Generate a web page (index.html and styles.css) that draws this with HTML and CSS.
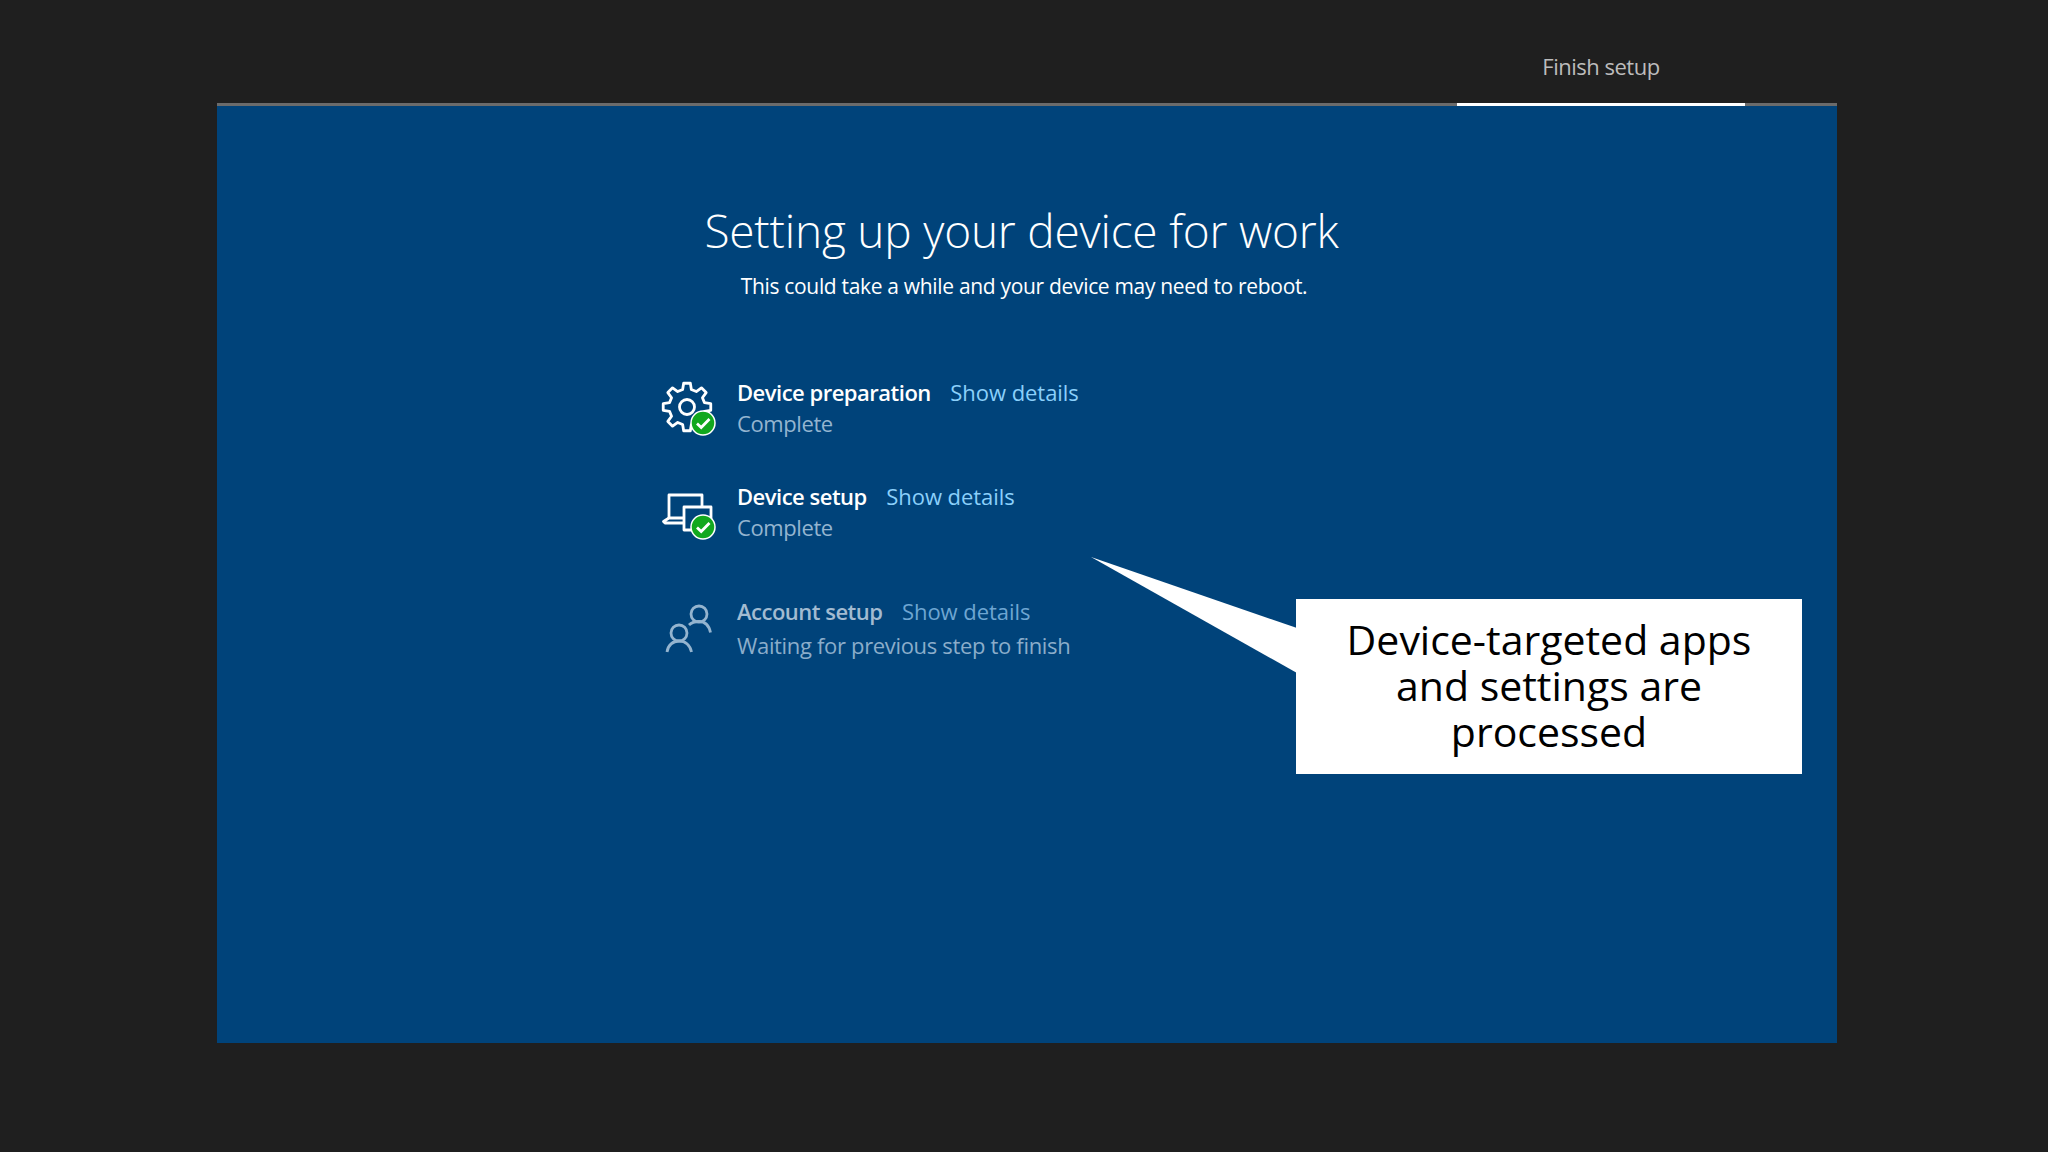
FILE: index.html
```html
<!DOCTYPE html>
<html lang="en">
<head>
<meta charset="utf-8">
<title>Setting up your device for work</title>
<link rel="stylesheet" href="styles.css">
</head>
<body>
<div class="frame">
  <header class="tabs"><div class="tab">Finish setup</div></header>
  <div class="track"><div class="track-fill"></div></div>
  <main class="panel">
    <h1 class="title">Setting up your device for work</h1>
    <p class="subtitle">This could take a while and your device may need to reboot.</p>
    <section class="steps">
      <div class="step step-prep">
        <svg class="icon" viewBox="0 0 60 60">
          <g class="gear" transform="translate(27 30)">
            <path d="M-4.35-17.47L-3.34-23.77 3.34-23.77 4.35-17.47 9.27-15.43 14.44-19.17 19.17-14.44 15.43-9.27 17.47-4.35 23.77-3.34 23.77 3.34 17.47 4.35 15.43 9.27 19.17 14.44 14.44 19.17 9.27 15.43 4.35 17.47 3.34 23.77-3.34 23.77-4.35 17.47-9.27 15.43-14.44 19.17-19.17 14.44-15.43 9.27-17.47 4.35-23.77 3.34-23.77-3.34-17.47-4.35-15.43-9.27-19.17-14.44-14.44-19.17-9.27-15.43Z"/>
            <circle r="7.5"/>
          </g>
          <circle class="badge" cx="43" cy="46" r="12"/>
          <path class="tick" d="M37 46.5l4.2 4L49.5 42"/>
        </svg>
        <div class="step-text">
          <div class="step-head"><span class="step-name">Device preparation</span><span class="step-link">Show details</span></div>
          <div class="step-status">Complete</div>
        </div>
      </div>
      <div class="step step-setup">
        <svg class="icon" viewBox="0 0 60 60">
          <g class="device">
            <path d="M9 37V14h33v11"/>
            <path d="M23 42H5l-1.500-1.500L9 37h14"/>
            <path d="M24 26h27v23H24Z"/>
          </g>
          <circle class="badge" cx="43" cy="46" r="12"/>
          <path class="tick" d="M37 46.500l4.200 4L49.500 42"/>
        </svg>
        <div class="step-text">
          <div class="step-head"><span class="step-name">Device setup</span><span class="step-link">Show details</span></div>
          <div class="step-status">Complete</div>
        </div>
      </div>
      <div class="step step-account">
        <svg class="icon" viewBox="0 0 60 60">
          <g class="people">
            <circle cx="39" cy="18" r="8"/>
            <path d="M29 29c3-3 6-3.500 10-3.500 6 0 10 4 11.500 11"/>
            <circle cx="19" cy="37" r="8"/>
            <path d="M7 56c1-7 6-11 12-11s11 4 12.500 11"/>
          </g>
        </svg>
        <div class="step-text">
          <div class="step-head"><span class="step-name">Account setup</span><span class="step-link">Show details</span></div>
          <div class="step-status">Waiting for previous step to finish</div>
        </div>
      </div>
    </section>
    <svg class="tail" viewBox="0 0 206 116"><polygon points="0,0 206,71 206,116"/></svg>
    <aside class="callout">Device-targeted apps and settings are processed</aside>
  </main>
</div>
</body>
</html>
```
FILE: styles.css
```css
html, body { margin: 0; padding: 0; }
body {
  width: 2048px;
  height: 1152px;
  background: #1f1f1f;
  overflow: hidden;
  font-family: "Open Sans", "Noto Sans", "Liberation Sans", sans-serif;
}
.frame { width: 1620px; margin-left: 217px; }
.tabs { height: 103px; display: flex; justify-content: flex-end; padding-right: 92px; box-sizing: border-box; }
.tab {
  width: 288px;
  padding-top: 51px;
  box-sizing: border-box;
  text-align: center;
  color: #bcbcbc;
  font-size: 22px;
  line-height: 30px;
  letter-spacing: -0.5px;
}
.track { height: 3px; background: #6b6b6b; display: flex; justify-content: flex-end; padding-right: 92px; }
.track-fill { width: 288px; background: #fff; }
.panel {
  position: relative;
  height: 937px;
  background: #00437a;
  display: flex;
  flex-direction: column;
  color: #fff;
}
.title {
  margin: 94px 11px 0 0;
  text-align: center;
  font-weight: 300;
  font-size: 46px;
  line-height: 60px;
  letter-spacing: -0.2px;
}
.subtitle {
  margin: 11px 6px 0 0;
  text-align: center;
  font-size: 21px;
  line-height: 30px;
  letter-spacing: -0.32px;
}
.steps { margin: 76px 0 0 443px; display: flex; flex-direction: column; }
.step { display: flex; gap: 17px; height: 104px; }
.step-setup { height: 115px; }
.icon { width: 60px; height: 60px; flex: none; }
.step-text { font-size: 22px; line-height: 30px; letter-spacing: -0.4px; }
.step-head { display: flex; gap: 19.5px; }
.step-name { font-weight: 600; letter-spacing: -0.5px; }
.step-link { color: #8bd0fb; font-weight: 500; letter-spacing: -0.05px; }
.step-status { color: #94b5d0; margin-top: 1px; }
.step-account .step-name { color: #a2bbd1; }
.step-account .step-link { color: #6ea6d2; }
.step-account .step-status { color: #8badca; margin-top: 4px; letter-spacing: -0.33px; }
.gear path, .gear circle, .device path {
  fill: none;
  stroke: #fff;
  stroke-width: 2.8;
  stroke-linejoin: round;
}
.badge { fill: #12a81e; stroke: #fff; stroke-width: 1.5; }
.tick { fill: none; stroke: #fff; stroke-width: 2.8; }
.people circle, .people path { fill: none; stroke: #94b4cf; stroke-width: 2.8; }
.tail { position: absolute; left: 874px; top: 451px; width: 206px; height: 116px; }
.tail polygon { fill: #fff; }
.callout {
  position: absolute;
  left: 1079px;
  top: 493px;
  width: 506px;
  height: 175px;
  box-sizing: border-box;
  padding: 17px 40px 0;
  background: #fff;
  color: #000;
  text-align: center;
  font-size: 41px;
  line-height: 46px;
}
```
